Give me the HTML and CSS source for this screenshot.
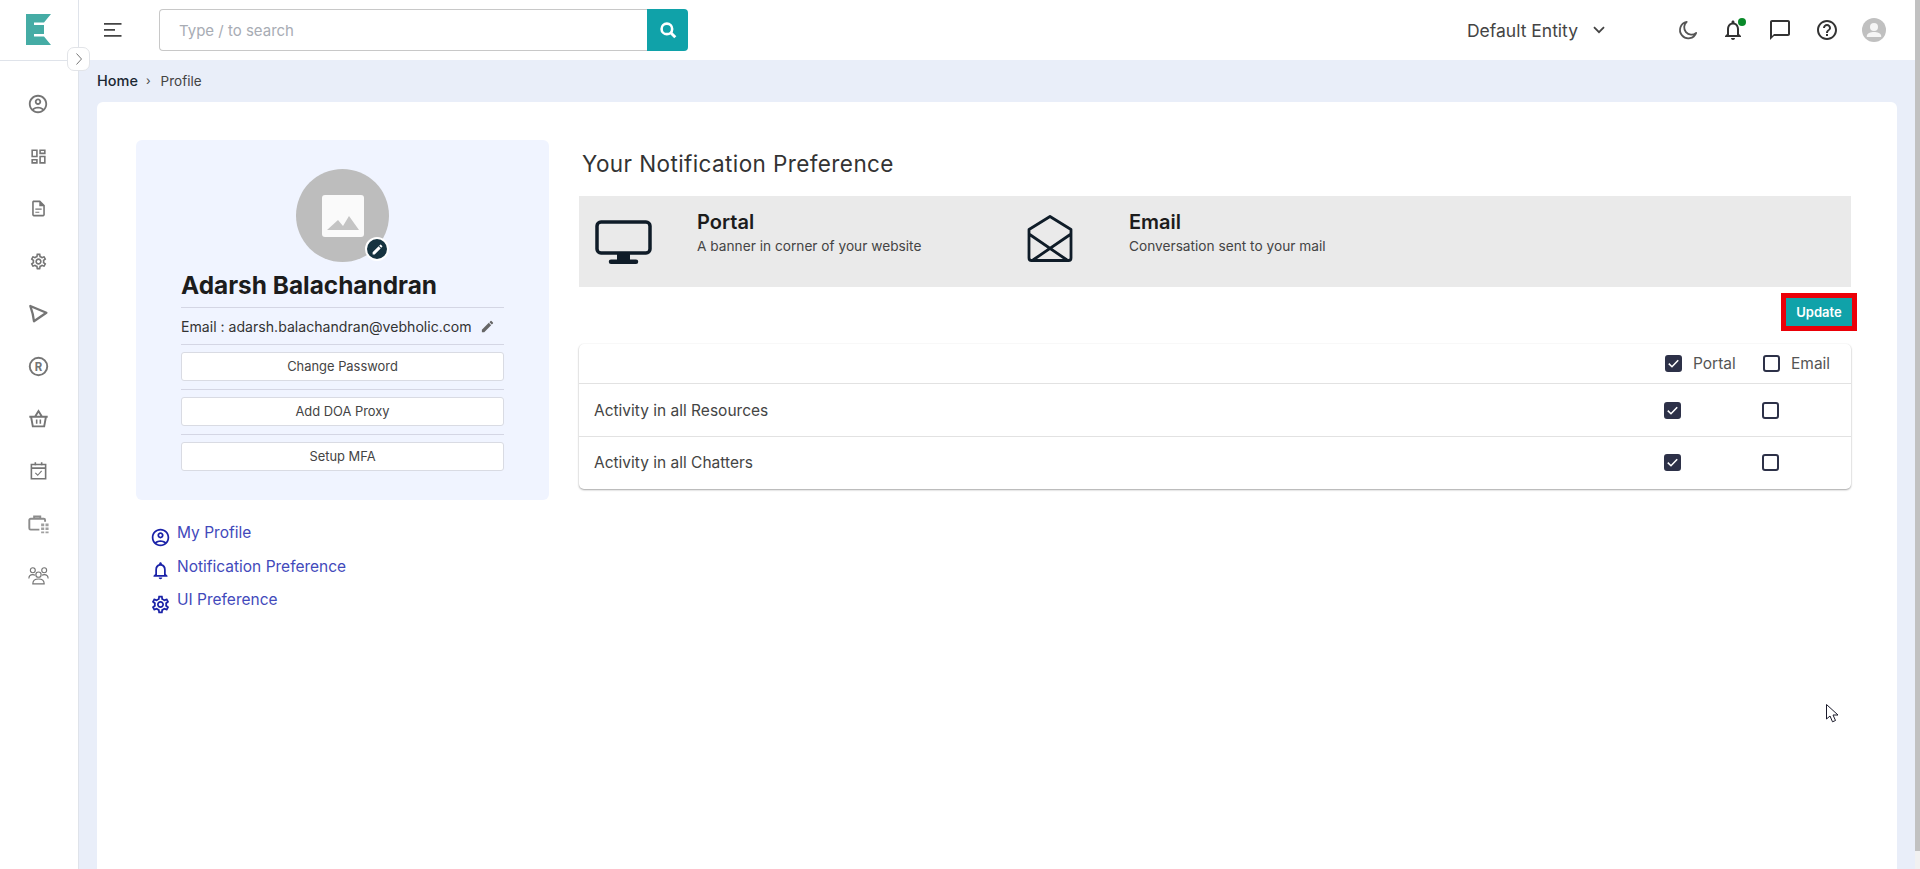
FILE: index.html
```html
<!DOCTYPE html>
<html lang="en">
<head>
<meta charset="utf-8">
<title>Profile</title>
<link rel="stylesheet" href="styles.css">
</head>
<body>
<svg class="defs" aria-hidden="true">
  <symbol id="i-person" viewBox="0 0 24 24"><path d="M12 2C6.48 2 2 6.48 2 12s4.48 10 10 10 10-4.48 10-10S17.52 2 12 2zM7.35 18.5C8.66 17.56 10.26 17 12 17s3.34.56 4.65 1.5c-1.31.94-2.91 1.5-4.65 1.5s-3.34-.56-4.65-1.5zm10.79-1.38C16.45 15.8 14.32 15 12 15s-4.45.8-6.14 2.12C4.7 15.73 4 13.95 4 12c0-4.42 3.58-8 8-8s8 3.58 8 8c0 1.95-.7 3.73-1.86 5.12zM12 6c-1.93 0-3.5 1.57-3.5 3.5S10.07 13 12 13s3.5-1.57 3.5-3.5S13.93 6 12 6zm0 5c-.83 0-1.5-.67-1.5-1.5S11.17 8 12 8s1.5.67 1.5 1.5S12.83 11 12 11z"/></symbol>
  <symbol id="i-gear" viewBox="0 0 24 24"><path d="M19.43 12.98c.04-.32.07-.64.07-.98 0-.34-.03-.66-.07-.98l2.11-1.65c.19-.15.24-.42.12-.64l-2-3.46c-.09-.16-.26-.25-.44-.25-.06 0-.12.01-.17.03l-2.49 1c-.52-.4-1.08-.73-1.69-.98l-.38-2.65C14.46 2.18 14.25 2 14 2h-4c-.25 0-.46.18-.49.42l-.38 2.65c-.61.25-1.17.59-1.69.98l-2.49-1c-.06-.02-.12-.03-.18-.03-.17 0-.34.09-.43.25l-2 3.46c-.13.22-.07.49.12.64l2.11 1.65c-.04.32-.07.65-.07.98 0 .33.03.66.07.98l-2.11 1.65c-.19.15-.24.42-.12.64l2 3.46c.09.16.26.25.44.25.06 0 .12-.01.17-.03l2.49-1c.52.4 1.08.73 1.69.98l.38 2.65c.03.24.24.42.49.42h4c.25 0 .46-.18.49-.42l.38-2.65c.61-.25 1.17-.59 1.69-.98l2.49 1c.06.02.12.03.18.03.17 0 .34-.09.43-.25l2-3.46c.12-.22.07-.49-.12-.64l-2.11-1.65zm-1.98-1.71c.04.31.05.52.05.73 0 .21-.02.43-.05.73l-.14 1.13.89.7 1.08.84-.7 1.21-1.27-.51-1.04-.42-.9.68c-.43.32-.84.56-1.25.73l-1.06.43-.16 1.13-.2 1.35h-1.4l-.19-1.35-.16-1.13-1.06-.43c-.43-.18-.83-.41-1.23-.71l-.91-.7-1.06.43-1.27.51-.7-1.21 1.08-.84.89-.7-.14-1.13c-.03-.31-.05-.54-.05-.74s.02-.43.05-.73l.14-1.13-.89-.7-1.08-.84.7-1.21 1.27.51 1.04.42.9-.68c.43-.32.84-.56 1.25-.73l1.06-.43.16-1.13.2-1.35h1.39l.19 1.35.16 1.13 1.06.43c.43.18.83.41 1.23.71l.91.7 1.06-.43 1.27-.51.7 1.21-1.07.85-.89.7.14 1.13zM12 8c-2.21 0-4 1.79-4 4s1.79 4 4 4 4-1.79 4-4-1.79-4-4-4zm0 6c-1.1 0-2-.9-2-2s.9-2 2-2 2 .9 2 2-.9 2-2 2z"/></symbol>
  <symbol id="i-bell" viewBox="0 0 24 24"><path d="M12 22c1.1 0 2-.9 2-2h-4c0 1.1.9 2 2 2zm6-6v-5c0-3.07-1.63-5.64-4.5-6.32V4c0-.83-.67-1.5-1.5-1.5s-1.5.67-1.5 1.5v.68C7.64 5.36 6 7.92 6 11v5l-2 2v1h16v-1l-2-2zm-2 1H8v-6c0-2.48 1.51-4.5 4-4.5s4 2.02 4 4.5v6z"/></symbol>
  <symbol id="i-pencil" viewBox="0 0 24 24"><path d="M3 17.25V21h3.75L17.81 9.94l-3.75-3.75L3 17.25zM20.71 7.04a1 1 0 0 0 0-1.41l-2.34-2.34a1 1 0 0 0-1.41 0l-1.83 1.83 3.75 3.75 1.83-1.83z"/></symbol>
  <symbol id="i-check" viewBox="0 0 18 18"><path d="M4 9.2l3.4 3.2L14 5.6" fill="none" stroke="#fff" stroke-width="1.7"/></symbol>
</svg>

<div class="app">
  <aside class="sidebar">
    <div class="logo-cell">
      <svg class="logo" viewBox="0 0 25 31"><path fill="#45aca5" d="M0 0H25L18 8.500H8V11H18V20H8V22.500H18L25 31H0Z"/></svg>
    </div>
    <nav class="side-nav">
      <a class="side-item"><svg class="side-icon big" viewBox="0 0 24 24"><use href="#i-person"/></svg></a>
      <a class="side-item"><svg class="side-icon small" viewBox="0 0 24 24"><path d="M19 5v2h-4V5h4M9 5v6H5V5h4m10 8v6h-4v-6h4M9 17v2H5v-2h4M21 3h-8v6h8V3zM11 3H3v10h8V3zm10 8h-8v10h8V11zm-10 4H3v6h8v-6z"/></svg></a>
      <a class="side-item"><svg class="side-icon small" viewBox="0 0 24 24"><path d="M8 16h5v1.500H8zm0-4h8v1.500H8zm6-10H6c-1.100 0-2 .9-2 2v16c0 1.100.89 2 1.990 2H18c1.100 0 2-.9 2-2V8l-6-6zm4 18H6V4h7v5h5v11z"/></svg></a>
      <a class="side-item"><svg class="side-icon small" viewBox="0 0 24 24"><use href="#i-gear"/></svg></a>
      <a class="side-item"><svg class="side-icon" viewBox="0 0 24 24"><path d="M2.600 3.400L21 11.200 6.800 20.800c-.6-6-1.900-11-4.200-17.400z" fill="none" stroke="#757575" stroke-width="2.600" stroke-linejoin="round"/></svg></a>
      <a class="side-item"><svg class="side-icon" viewBox="0 0 24 24"><circle cx="12" cy="12" r="10" fill="none" stroke="#757575" stroke-width="2.200"/><text class="reg-r" x="12" y="16.700" text-anchor="middle">R</text></svg></a>
      <a class="side-item"><svg class="side-icon" viewBox="0 0 24 24"><path d="M1.500 10h21M3.500 10l2 11h13l2-11M8 10l4-6.500L16 10" fill="none" stroke="#757575" stroke-width="2.200"/><path d="M9 13h1.800v5H9zM13.200 13H15v5h-1.800z"/></svg></a>
      <a class="side-item"><svg class="side-icon small" viewBox="0 0 24 24"><path d="M3 4.500h18v18H3zM3 9h18" fill="none" stroke="#757575" stroke-width="2"/><path d="M7 1.500h2v4H7zM15 1.500h2v4h-2z"/><path d="M8 15l3 3 5-5.500" fill="none" stroke="#757575" stroke-width="1.400"/></svg></a>
      <a class="side-item"><svg class="side-icon" viewBox="0 0 24 24"><path d="M13 19H3a1.500 1.500 0 0 1-1.500-1.500V8A1.500 1.500 0 0 1 3 6.500h15A1.500 1.500 0 0 1 19.500 8v2M7 6.500V4h7v2.500" fill="none" stroke="#8c8c8c" stroke-width="2.200"/><path fill="#a0a0a0" d="M15 12h3.500v3H15zM20 12h3.500v3H20zM15 16.500h3.500v3H15zM20 16.500h3.500v3H20zM15 21h3.500v2H15zM20 21h3.500v2H20z"/></svg></a>
      <a class="side-item"><svg class="side-icon" viewBox="0 0 24 24"><g fill="none" stroke="#757575" stroke-width="1.300"><circle cx="12" cy="11" r="3"/><circle cx="5.500" cy="6" r="2.800"/><circle cx="18.500" cy="6" r="2.800"/><path d="M5.500 21.500c0-3.600 3-5.500 6.500-5.500s6.500 1.900 6.500 5.500zM1 15.500c0-3 2-4.500 4.500-4.500 1 0 1.800.2 2.500.6M23 15.500c0-3-2-4.500-4.500-4.500-1 0-1.800.2-2.500.6"/></g></svg></a>
    </nav>
  </aside>

  <button class="collapse" type="button" aria-label="Expand sidebar"><svg viewBox="0 0 10 14"><path d="M2.500 1.500L7.500 7l-5 5.500" fill="none" stroke="#777" stroke-width="1"/></svg></button>

  <div class="column">
    <header class="topbar">
      <svg class="menu-icon" viewBox="0 0 18 14"><path d="M0 .800h17.500M0 6.800h11M0 12.800h17.500" stroke="#444" stroke-width="1.700"/></svg>
      <form class="search">
        <span class="search-field">Type / to search</span>
        <span class="search-btn"><svg viewBox="0 0 16 16"><circle cx="7" cy="7" r="4.700" fill="none" stroke="#fff" stroke-width="2.300"/><path d="M10.500 10.500L14.500 14.500" stroke="#fff" stroke-width="2.600"/></svg></span>
      </form>
      <div class="entity">
        <span>Default Entity</span>
        <svg viewBox="0 0 12 8"><path d="M1 1.200l5 5 5-5" fill="none" stroke="#444" stroke-width="1.800"/></svg>
      </div>
      <div class="tools">
        <svg class="tool moon" viewBox="-2 -2 28 28"><path d="M10.500 2.500a9.700 9.700 0 1 0 11 12.800 8.300 8.300 0 0 1-11-12.800z" fill="none" stroke="#555" stroke-width="2.100" stroke-linejoin="round"/></svg>
        <span class="bell-wrap"><svg class="tool" viewBox="0 0 24 24"><use href="#i-bell"/></svg><i class="dot"></i></span>
        <svg class="tool" viewBox="0 0 24 24"><path d="M20 2H4c-1.100 0-2 .9-2 2v18l4-4h14c1.100 0 2-.9 2-2V4c0-1.100-.9-2-2-2zm0 14H6l-2 2V4h16v12z"/></svg>
        <svg class="tool" viewBox="0 0 24 24"><path d="M11 18h2v-2h-2v2zm1-16C6.480 2 2 6.480 2 12s4.480 10 10 10 10-4.480 10-10S17.520 2 12 2zm0 18c-4.410 0-8-3.590-8-8s3.590-8 8-8 8 3.590 8 8-3.590 8-8 8zm0-14c-2.210 0-4 1.790-4 4h2c0-1.100.9-2 2-2s2 .9 2 2c0 2-3 1.750-3 5h2c0-2.250 3-2.500 3-5 0-2.210-1.790-4-4-4z"/></svg>
        <svg class="avatar-mini" viewBox="0 0 24 24"><circle cx="12" cy="12" r="12" fill="#c0c0c0"/><circle cx="12" cy="9" r="4" fill="#f5f5f5"/><path fill="#f5f5f5" d="M4.800 18c0-2.800 4-4 7.200-4s7.200 1.200 7.200 4v1H4.800z"/></svg>
      </div>
    </header>

    <main class="content">
      <div class="breadcrumb"><b>Home</b><span class="sep">›</span><span>Profile</span></div>
      <section class="card">
        <div class="left">
          <div class="panel">
            <div class="photo">
              <svg class="photo-img" viewBox="0 0 42 42"><rect width="42" height="42" rx="3" fill="#fafafa"/><path fill="#c4c4c4" d="M5 35L16 25l5 6 6-10 10 14z"/></svg>
              <span class="photo-edit"><svg viewBox="0 0 24 24"><use href="#i-pencil"/></svg></span>
            </div>
            <h2 class="name">Adarsh Balachandran</h2>
            <div class="email-row"><span>Email : adarsh.balachandran@vebholic.com</span><svg viewBox="0 0 24 24"><use href="#i-pencil"/></svg></div>
            <div class="btn-row"><button type="button" class="ghost">Change Password</button></div>
            <div class="btn-row"><button type="button" class="ghost">Add DOA Proxy</button></div>
            <div class="btn-row last"><button type="button" class="ghost">Setup MFA</button></div>
          </div>
          <ul class="links">
            <li><svg viewBox="0 0 24 24"><use href="#i-person"/></svg><a>My Profile</a></li>
            <li><svg viewBox="0 0 24 24"><use href="#i-bell"/></svg><a>Notification Preference</a></li>
            <li><svg viewBox="0 0 24 24"><use href="#i-gear"/></svg><a>UI Preference</a></li>
          </ul>
        </div>

        <div class="right">
          <h1 class="title">Your Notification Preference</h1>
          <div class="band">
            <div class="channel">
              <div class="channel-icon"><svg class="monitor" viewBox="0 0 57 44"><rect x="2" y="2" width="53" height="31" rx="4" fill="none" stroke="#0f1c28" stroke-width="3.500"/><path fill="#0f1c28" d="M22 34h13v6H22zM16 39.500h25a2 2 0 0 1 0 4.500H16a2 2 0 0 1 0-4.500z"/></svg></div>
              <div class="channel-text"><div class="channel-name">Portal</div><div class="channel-desc">A banner in corner of your website</div></div>
            </div>
            <div class="channel">
              <div class="channel-icon"><svg class="envelope" viewBox="0 0 46 47"><path d="M2 14.500L23 1.500 44 14.500V43a2.500 2.500 0 0 1-2.500 2.500H4.500A2.500 2.500 0 0 1 2 43zM2 19l38 26M44 19L6 45" fill="none" stroke="#0f1c28" stroke-width="2.800" stroke-linejoin="round"/></svg></div>
              <div class="channel-text"><div class="channel-name">Email</div><div class="channel-desc">Conversation sent to your mail</div></div>
            </div>
          </div>
          <div class="actions"><button type="button" class="update">Update</button></div>
          <div class="table">
            <div class="row head">
              <div></div>
              <label class="cell"><span class="check on"><svg viewBox="0 0 18 18"><use href="#i-check"/></svg></span>Portal</label>
              <label class="cell"><span class="check"></span>Email</label>
            </div>
            <div class="row">
              <div class="row-label">Activity in all Resources</div>
              <span class="cell"><span class="check on"><svg viewBox="0 0 18 18"><use href="#i-check"/></svg></span></span>
              <span class="cell"><span class="check"></span></span>
            </div>
            <div class="row">
              <div class="row-label">Activity in all Chatters</div>
              <span class="cell"><span class="check on"><svg viewBox="0 0 18 18"><use href="#i-check"/></svg></span></span>
              <span class="cell"><span class="check"></span></span>
            </div>
          </div>
        </div>
      </section>
    </main>
  </div>

  <div class="scrollbar"><div class="thumb"></div></div>
  <svg class="cursor" viewBox="0 0 13 19"><path d="M.5.500v14.500l3.500-3 2.500 5.800 3-1.300-2.500-5.500h5z" fill="#fff" stroke="#1a1a2a" stroke-width="1"/></svg>
</div>
</body>
</html>
```

FILE: styles.css
```css
* { box-sizing: border-box; }
html, body { margin: 0; height: 100%; overflow: hidden; }
body { font-family: "Inter", "Noto Sans", sans-serif; color: #333; background: #fff; }
.defs { display: none; }
button { font-family: inherit; }
h1, h2 { margin: 0; font-weight: 400; }
ul { list-style: none; margin: 0; padding: 0; }

.app { position: relative; display: flex; height: 869px; }

/* sidebar */
.sidebar { flex: 0 0 79px; border-right: 1px solid #dfe3ea; background: #fff; }
.logo-cell { height: 61px; padding: 14px 0 0 26px; border-bottom: 1px solid #dfe3ea; margin-right: -1px; }
.logo { display: block; width: 25px; height: 31px; }
.side-nav { display: flex; flex-direction: column; padding-top: 17px; }
.side-item { display: flex; align-items: center; justify-content: center; height: 52.4px; padding-right: 2px; }
.side-icon { width: 21px; height: 21px; fill: #757575; }
.side-icon.small { width: 19px; height: 19px; }
.side-icon.big { width: 22px; height: 22px; }
.reg-r { font: 700 13px "Inter", sans-serif; fill: #757575; }

.collapse { position: absolute; left: 67px; top: 47px; width: 23px; height: 24px; padding: 0; display: flex; align-items: center; justify-content: center; background: #fff; border: 1px solid #e2e4e8; border-radius: 7px; }
.collapse svg { width: 10px; height: 14px; }

/* top bar */
.column { flex: 1; min-width: 0; display: flex; flex-direction: column; }
.topbar { height: 60px; flex: none; display: flex; align-items: center; padding: 0 29px 0 25px; background: #fff; }
.menu-icon { width: 18px; height: 14px; flex: none; }
.search { display: flex; width: 529px; height: 42px; margin-left: 37px; }
.search-field { flex: 1; display: flex; align-items: center; padding-left: 19px; font-size: 15px; color: #a8acb4; border: 1px solid #c8c8c8; border-right: 0; border-radius: 4px 0 0 4px; }
.search-btn { width: 41px; display: flex; align-items: center; justify-content: center; background: #10a2a9; border-radius: 0 4px 4px 0; }
.search-btn svg { width: 18px; height: 18px; }
.entity { margin-left: auto; display: flex; align-items: center; gap: 15px; font-size: 17.5px; color: #444; }
.entity svg { width: 12px; height: 8px; }
.tools { display: flex; align-items: center; gap: 23px; margin-left: 71px; }
.tool { display: block; width: 24px; height: 24px; fill: #333; }
.tool.moon { margin-right: -2px; }
.bell-wrap { position: relative; display: block; }
.dot { position: absolute; top: 0; right: -1px; width: 8px; height: 8px; border-radius: 50%; background: #0a8a2a; }
.avatar-mini { width: 24px; height: 24px; }

/* main */
.content { flex: 1; min-height: 0; display: flex; flex-direction: column; padding: 0 18px; background: #e9eef9; }
.breadcrumb { height: 42px; flex: none; display: flex; align-items: center; gap: 8px; font-size: 13.5px; color: #444; padding-bottom: 1px; }
.breadcrumb b { font-size: 14.5px; font-weight: 500; color: #1b2733; }
.sep { font-size: 12px; margin-right: 2px; }
.card { flex: 1; display: flex; gap: 30px; padding: 38px 46px 0 39px; background: #fff; border-radius: 6px 6px 0 0; }

/* left */
.left { flex: 0 0 413px; }
.panel { height: 360px; padding: 29px 45px 0; background: #f0f4ff; border-radius: 6px; }
.photo { position: relative; width: 93px; height: 93px; margin: 0 auto; display: flex; align-items: center; justify-content: center; background: #bdbdbd; border-radius: 50%; }
.photo-img { width: 42px; height: 42px; }
.photo-edit { position: absolute; right: 0; bottom: 1px; width: 24px; height: 24px; display: flex; align-items: center; justify-content: center; background: #163340; border: 2px solid #fff; border-radius: 50%; }
.photo-edit svg { width: 13px; height: 13px; fill: #fff; }
.name { height: 46px; padding-top: 5px; line-height: 36px; font-size: 24.4px; font-weight: 700; color: #1c1c1c; border-bottom: 1px solid #d4d6e4; white-space: nowrap; }
.email-row { height: 37px; display: flex; align-items: center; gap: 8px; font-size: 14.1px; color: #333; border-bottom: 1px solid #d4d6e4; white-space: nowrap; }
.email-row svg { width: 15px; height: 15px; fill: #666; }
.btn-row { padding: 7px 0 8px; border-bottom: 1px solid #d4d6e4; }
.btn-row.last { border-bottom: 0; }
.ghost { display: block; width: 100%; height: 29px; padding: 0; font-size: 12.9px; color: #444; background: #fff; border: 1px solid #d9dbe3; border-radius: 3px; }
.links { padding: 21px 0 0 14px; }
.links li { height: 33.5px; display: flex; gap: 6px; line-height: 24px; font-size: 15.5px; color: #4249bb; }
.links svg { width: 21px; height: 21px; margin-top: 5.5px; fill: #1a22a8; flex: none; }

/* right */
.right { flex: 1; min-width: 0; }
.title { height: 48px; margin-bottom: 8px; padding-left: 3px; line-height: 48px; font-size: 22.5px; letter-spacing: .4px; color: #333; }
.band { height: 91px; padding-left: 16px; display: flex; align-items: center; background: #eaeaea; }
.channel { width: 432px; display: flex; align-items: center; }
.channel-icon { flex: 0 0 102px; display: flex; }
.monitor { width: 57px; height: 44px; }
.envelope { width: 46px; height: 47px; margin-top: -6px; }
.channel-text { margin-bottom: 18px; }
.channel-name { font-size: 20px; font-weight: 600; line-height: 26px; color: #1c1c1c; }
.channel-desc { font-size: 13.7px; line-height: 22px; color: #444; }
.actions { display: flex; justify-content: flex-end; margin: 6px -6px 13px 0; }
.update { width: 76px; height: 38px; padding: 0; font-size: 13px; font-weight: 600; color: #fff; background: #10a2a9; border: 5px solid #ea0008; }
.table { border-radius: 5px; background: #fff; box-shadow: 0 1px 2px rgba(0,0,0,.35), 0 0 2px rgba(0,0,0,.05); }
.row { height: 53px; display: grid; grid-template-columns: 1fr 98px 89px; align-items: center; padding-left: 15px; border-bottom: 1px solid #e2e2e2; }
.row:last-child { border-bottom: 0; height: 52px; padding-bottom: 1px; }
.row.head { height: 40px; grid-template-columns: 1fr 98px 88px; }
.row-label { font-size: 15.5px; color: #444; }
.cell { display: flex; align-items: center; gap: 11px; font-size: 15.5px; color: #555; }
.check { width: 17px; height: 17px; flex: none; display: block; background: #fff; border: 2px solid #2d3148; border-radius: 3px; }
.check.on { background: #2d3148; }
.check svg { display: block; width: 17px; height: 17px; margin: -2px; }

/* window chrome */
.scrollbar { flex: 0 0 5px; background: #f1f1f1; }
.thumb { height: 851px; background: #c1c1c1; }
.cursor { position: absolute; left: 1826px; top: 704px; width: 13px; height: 19px; }
```
